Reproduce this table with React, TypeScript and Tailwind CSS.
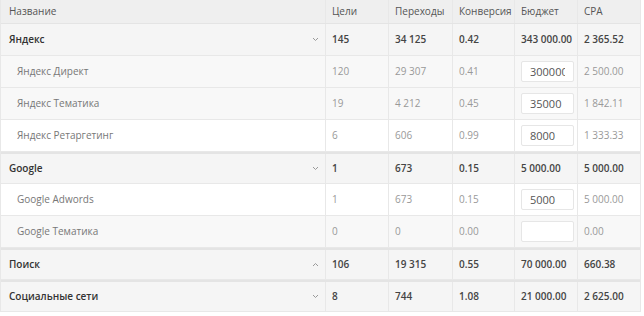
import React from 'react';

type Row = {
    name: string;
    goals: string;
    visits: string;
    conv: string;
    budget: string;
    cpa: string;
    group?: boolean;
    open?: boolean;
    bg: string;
};

const ROWS: Row[] = [
    { name: 'Яндекс', goals: '145', visits: '34 125', conv: '0.42', budget: '343 000.00', cpa: '2 365.52', group: true, bg: 'bg-[#f5f5f5]' },
    { name: 'Яндекс Директ', goals: '120', visits: '29 307', conv: '0.41', budget: '300000', cpa: '2 500.00', bg: 'bg-[#f8f8f8]' },
    { name: 'Яндекс Тематика', goals: '19', visits: '4 212', conv: '0.45', budget: '35000', cpa: '1 842.11', bg: 'bg-[#f8f8f8]' },
    { name: 'Яндекс Ретаргетинг', goals: '6', visits: '606', conv: '0.99', budget: '8000', cpa: '1 333.33', bg: 'bg-white' },
    { name: 'Google', goals: '1', visits: '673', conv: '0.15', budget: '5 000.00', cpa: '5 000.00', group: true, bg: 'bg-[#f5f5f5]' },
    { name: 'Google Adwords', goals: '1', visits: '673', conv: '0.15', budget: '5000', cpa: '5 000.00', bg: 'bg-white' },
    { name: 'Google Тематика', goals: '0', visits: '0', conv: '0.00', budget: '', cpa: '0.00', bg: 'bg-[#f8f8f8]' },
    { name: 'Поиск', goals: '106', visits: '19 315', conv: '0.55', budget: '70 000.00', cpa: '660.38', group: true, open: true, bg: 'bg-[#f5f5f5]' },
    { name: 'Социальные сети', goals: '8', visits: '744', conv: '1.08', budget: '21 000.00', cpa: '2 625.00', group: true, bg: 'bg-[#f5f5f5]' },
];

const cols = 'grid grid-cols-[325px_63px_64px_62px_63px_1fr]';
const cell = 'flex items-center border-r border-[#e8e8e8] pl-[6px] whitespace-nowrap overflow-hidden';

const Chevron = ({ up }: { up?: boolean }) => (
    <svg width="7" height="5" viewBox="0 0 7 5" className="text-[#9a9a9a]">
        <path d={up ? 'M1 4 L3.5 1.5 L6 4' : 'M1 1 L3.5 3.5 L6 1'} fill="none" stroke="currentColor" strokeWidth="1" />
    </svg>
);

const App: React.FC = () => {
    return (
        <div className="w-[644px] h-[316px] bg-white overflow-hidden text-[10px]" style={{ fontFamily: '"Open Sans", "Liberation Sans", sans-serif' }}>
            <div className="w-[641px] border-l border-r border-[#e8e8e8]">
                {/* Header */}
                <div className={`${cols} h-[24px] bg-[#efefef] border-b border-[#e4e4e4] text-[#555]`}>
                    <div className={`${cell} pl-[8px]`}>Название</div>
                    <div className={cell}>Цели</div>
                    <div className={cell}>Переходы</div>
                    <div className={cell}>Конверсия</div>
                    <div className={cell}>Бюджет</div>
                    <div className={`${cell} border-r-0`}>CPA</div>
                </div>

                {ROWS.map((r, i) => {
                    const topBorder = r.group && i > 0 ? 'border-t-2 border-t-[#e4e4e4]' : '';
                    const text = r.group ? 'font-semibold text-[#444]' : 'text-[#999]';
                    return (
                        <div key={r.name} className={`${cols} h-[32px] ${topBorder} border-b border-[#e8e8e8] ${r.bg} ${text}`}>
                            <div className={`${cell} justify-between pr-[6px] ${r.group ? 'pl-[8px] text-[#333]' : 'pl-[16px] text-[#777]'}`}>
                                <span>{r.name}</span>
                                {r.group && <Chevron up={r.open} />}
                            </div>
                            <div className={cell}>{r.goals}</div>
                            <div className={cell}>{r.visits}</div>
                            <div className={cell}>{r.conv}</div>
                            <div className={cell}>
                                {r.group ? (
                                    r.budget
                                ) : (
                                    <input
                                        readOnly
                                        defaultValue={r.budget}
                                        className="w-[53px] h-[21px] bg-white border border-[#e6e6e6] rounded-[2px] px-[8px] text-[11px] text-[#555] outline-none"
                                    />
                                )}
                            </div>
                            <div className={`${cell} border-r-0`}>{r.cpa}</div>
                        </div>
                    );
                })}
            </div>
        </div>
    );
};

export default App;
